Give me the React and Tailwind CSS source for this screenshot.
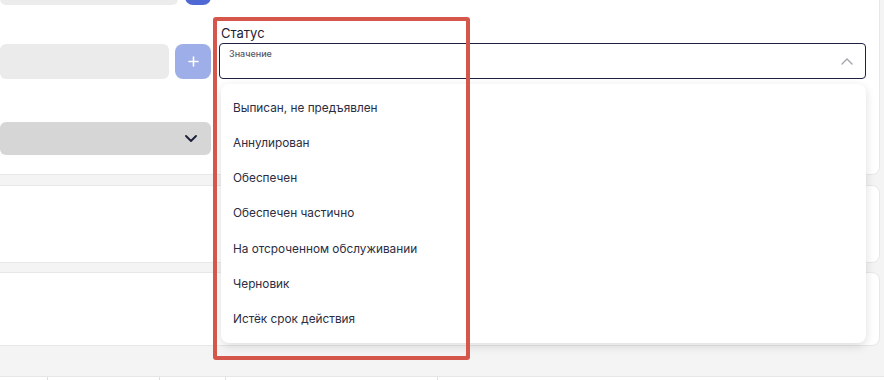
import React from "react";

const items = [
  "Выписан, не предъявлен",
  "Аннулирован",
  "Обеспечен",
  "Обеспечен частично",
  "На отсроченном обслуживании",
  "Черновик",
  "Истёк срок действия",
];

export default function App() {
  return (
    <div
      className="relative w-[884px] h-[380px] overflow-hidden bg-[#f4f4f4]"
      style={{ fontFamily: "Inter, 'Noto Sans', sans-serif" }}
    >
      <div className="-ml-[12px] w-[892px] flex flex-col">
        {/* Card 1 */}
        <div className="-mt-[40px] h-[215px] bg-white border border-[#e8e8e8] rounded-lg pl-[11px] pt-[9px] flex gap-[8px]">
          <div className="w-[211px] flex flex-col">
            <div className="flex h-[35px]">
              <div className="w-[178px] bg-[#ececec] rounded-md" />
              <div className="w-[26px] ml-[7px] bg-[#5068d4] rounded-lg" />
            </div>
            <div className="flex h-[35px] mt-[39px]">
              <div className="w-[169px] bg-[#ebebeb] rounded-md" />
              <div className="w-[36px] ml-[6px] bg-[#9eaee8] rounded-lg flex items-center justify-center">
                <svg width="11" height="11" viewBox="0 0 11 11">
                  <path d="M5.5 1v9M1 5.5h9" stroke="white" strokeWidth="1.6" strokeLinecap="round" />
                </svg>
              </div>
            </div>
            <div className="mt-[43px] h-[33px] bg-[#d6d6d6] rounded-md flex items-center justify-end pr-[14px]">
              <svg width="12" height="7" viewBox="0 0 12 7" fill="none">
                <polyline points="1,1 6,6 11,1" stroke="#1b1e3a" strokeWidth="1.8" strokeLinecap="round" strokeLinejoin="round" />
              </svg>
            </div>
          </div>
          <div className="w-[647px] flex flex-col pt-[55px]">
            <div className="h-[16px] leading-[16px] text-[13px] text-[#1f2133] pl-[2px]">Статус</div>
            <div className="relative mt-[2px] h-[36px] border border-[#1e2140] rounded-[4px] flex items-start justify-between pl-[9px] pr-[12px]">
              <span className="mt-[4px] text-[9px] font-medium leading-[12px] text-[#55576a]">Значение</span>
              <svg className="mt-[14px]" width="12" height="7" viewBox="0 0 12 7" fill="none">
                <polyline points="1,6 6,1 11,6" stroke="#a3a3ae" strokeWidth="1.4" strokeLinecap="round" strokeLinejoin="round" />
              </svg>
              <div className="absolute top-[40px] left-[1px] -right-px h-[259px] bg-white rounded-lg shadow-[0_3px_10px_rgba(0,0,0,0.14)] pt-[7px] pb-[4px] flex flex-col z-10">
                {items.map((t) => (
                  <div key={t} className="h-[35.2px] shrink-0 flex items-center pl-[12px] text-[11.8px] text-[#2b2d42]">
                    {t}
                  </div>
                ))}
              </div>
            </div>
          </div>
        </div>
        {/* Card 2 */}
        <div className="mt-[10px] h-[78px] bg-white border border-[#e8e8e8] rounded-lg" />
        {/* Card 3 */}
        <div className="mt-[9px] h-[74px] bg-white border border-[#e8e8e8] rounded-lg" />
      </div>
      {/* bottom table header */}
      <div className="mt-[30px] h-[10px] bg-white border-t border-[#e6e6e6] flex">
        <div className="w-[48px] border-r border-[#e0e0e0]" />
        <div className="w-[112px] border-r border-[#e0e0e0]" />
        <div className="w-[66px] border-r border-[#e0e0e0]" />
        <div className="w-[212px] border-r border-[#e0e0e0]" />
      </div>
      {/* highlight */}
      <div className="absolute left-[213px] top-[17px] w-[257px] h-[343px] border-[4px] border-[#d5564b] rounded-[3px] z-20" />
    </div>
  );
}
